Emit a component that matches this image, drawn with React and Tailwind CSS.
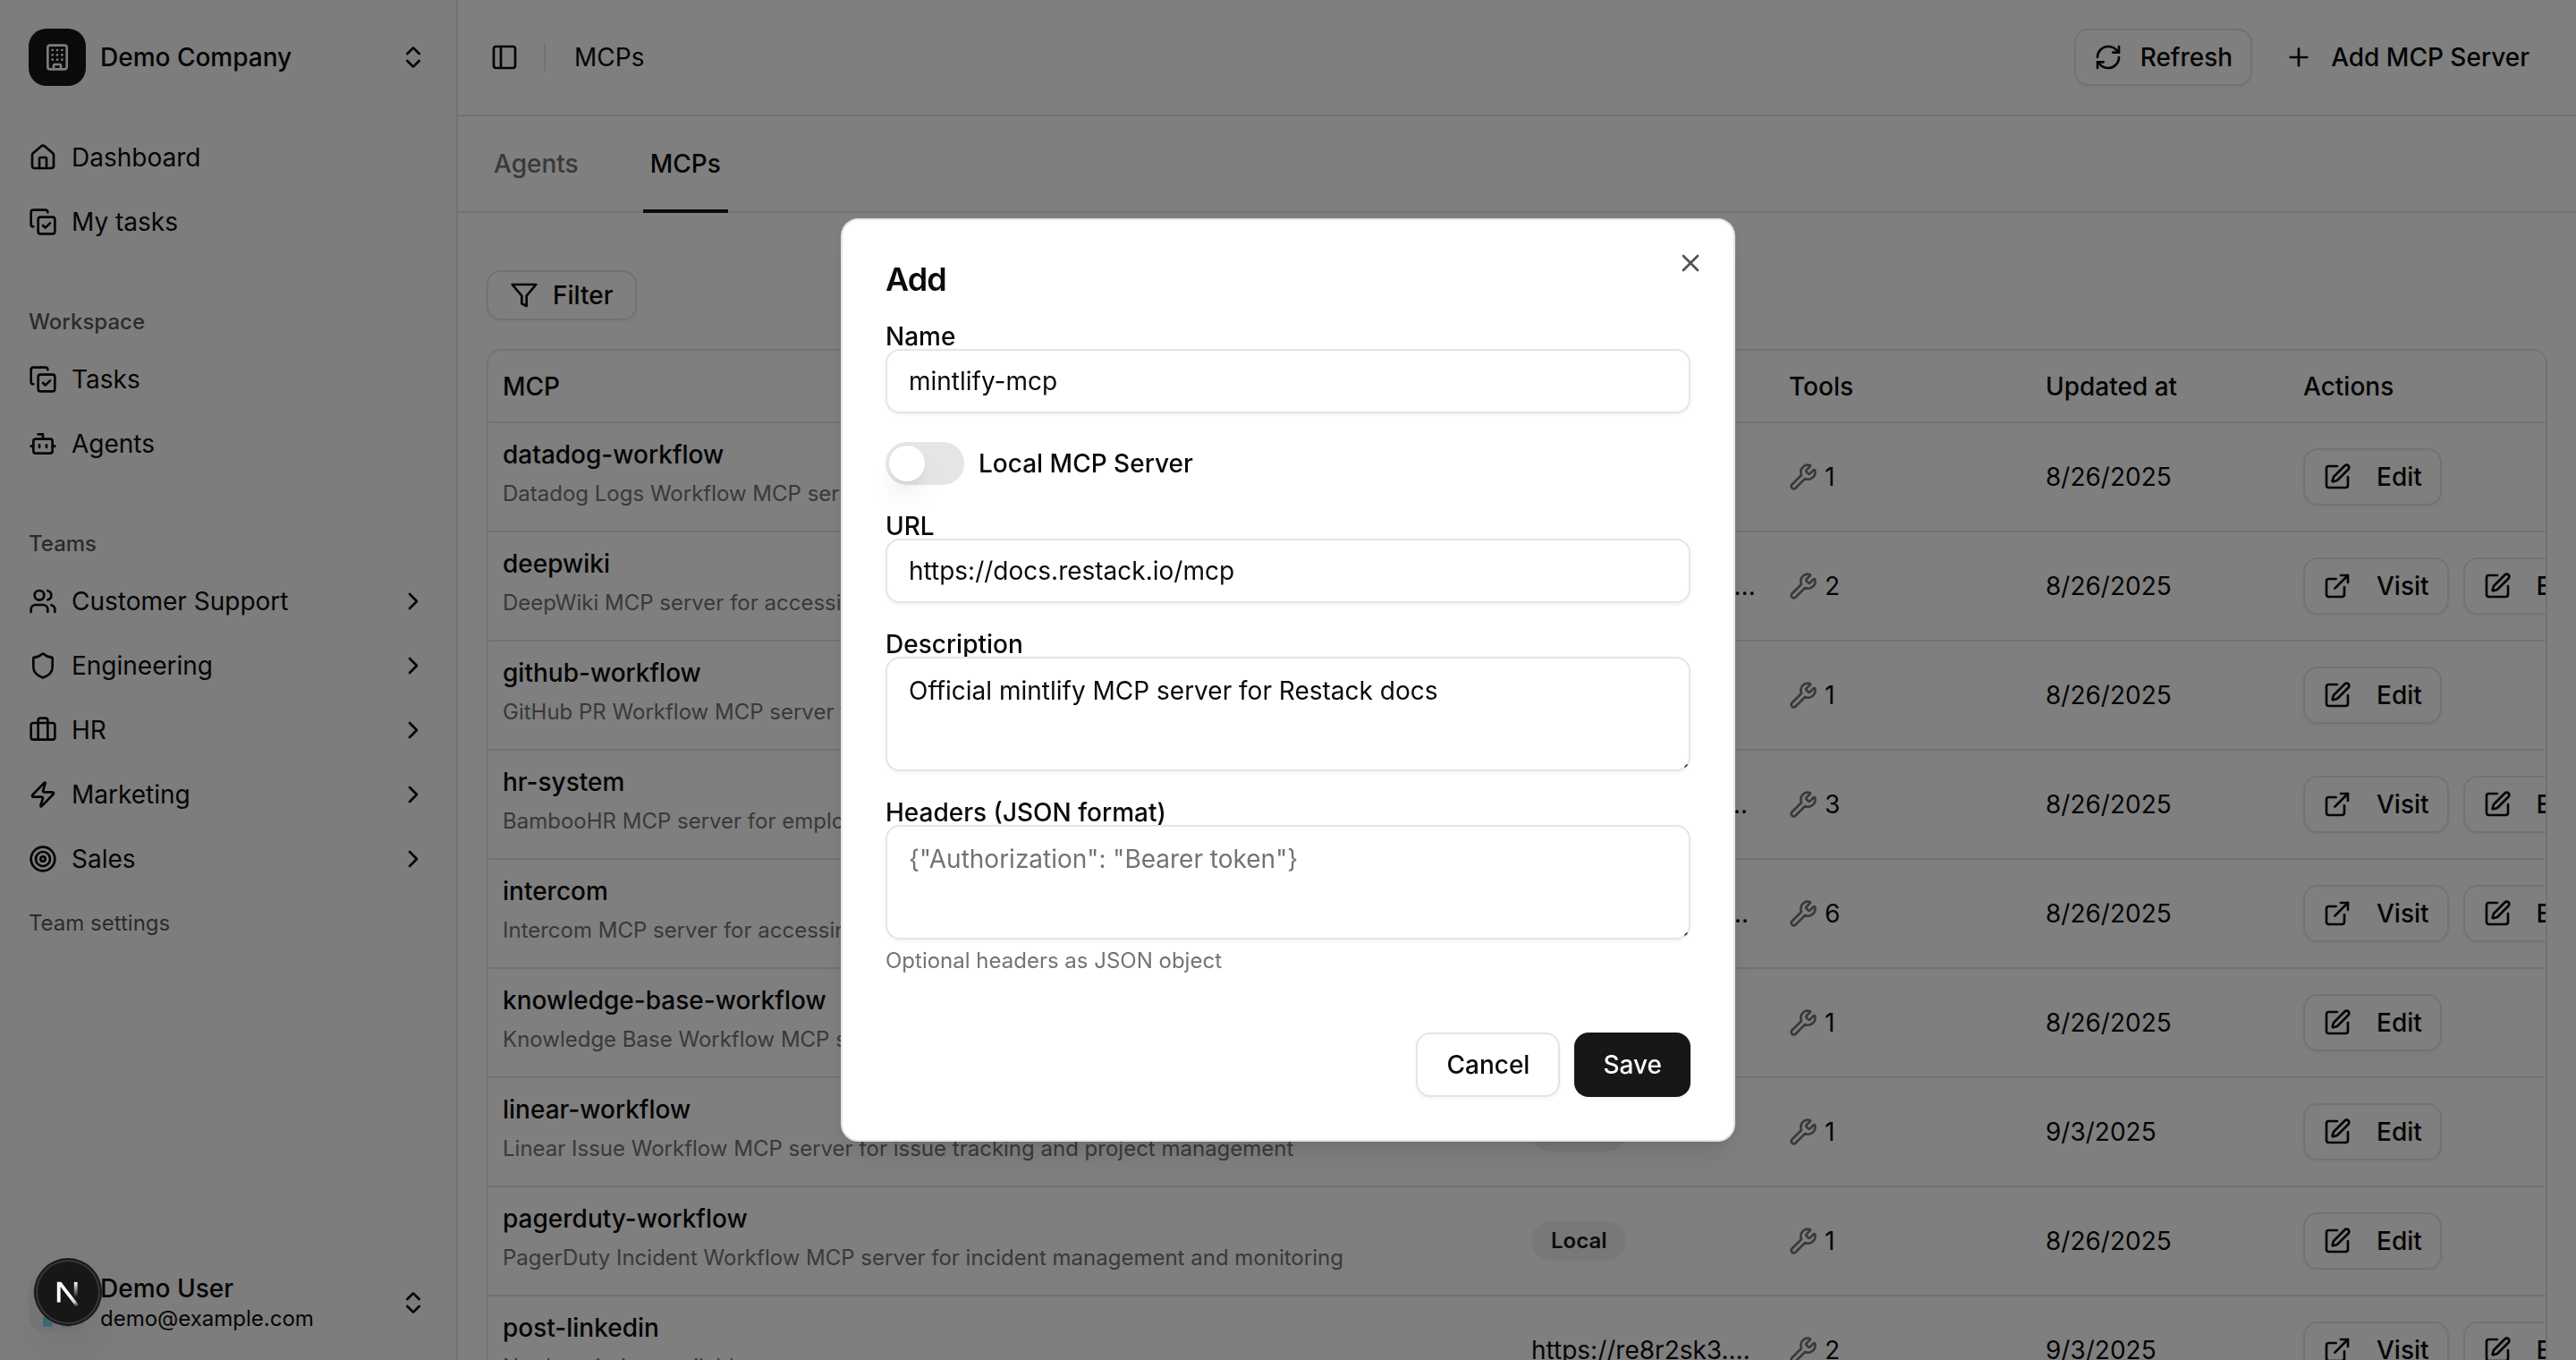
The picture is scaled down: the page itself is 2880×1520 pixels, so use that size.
import React, { useState } from "react";
import {
  Bot,
  Briefcase,
  Building,
  ChevronRight,
  ChevronsUpDown,
  CopyCheck,
  ExternalLink,
  House,
  PanelLeft,
  Plus,
  RefreshCw,
  Shield,
  SquarePen,
  Target,
  Users,
  Wrench,
  X,
  Zap,
} from "lucide-react";

const teams = [
  { name: "Customer Support", icon: Users },
  { name: "Engineering", icon: Shield },
  { name: "HR", icon: Briefcase },
  { name: "Marketing", icon: Zap },
  { name: "Sales", icon: Target },
];

const servers = [
  { name: "datadog-workflow", description: "Datadog Logs Workflow MCP server for log analysis and monitoring", tools: 1, updatedAt: "8/26/2025" },
  { name: "deepwiki", description: "DeepWiki MCP server for accessing repository documentation", url: "https://mcp.deepwiki.com/mcp", tools: 2, updatedAt: "8/26/2025" },
  { name: "github-workflow", description: "GitHub PR Workflow MCP server for pull requests", tools: 1, updatedAt: "8/26/2025" },
  { name: "hr-system", description: "BambooHR MCP server for employee data and time off", url: "https://mcp.bamboohr.com/mcp", tools: 3, updatedAt: "8/26/2025" },
  { name: "intercom", description: "Intercom MCP server for accessing conversations", url: "https://mcp.intercom.com/mcp", tools: 6, updatedAt: "8/26/2025" },
  { name: "knowledge-base-workflow", description: "Knowledge Base Workflow MCP server for search", tools: 1, updatedAt: "8/26/2025" },
  { name: "linear-workflow", description: "Linear Issue Workflow MCP server for issue tracking and project management", tools: 1, updatedAt: "9/3/2025" },
  { name: "pagerduty-workflow", description: "PagerDuty Incident Workflow MCP server for incident management and monitoring", tools: 1, updatedAt: "8/26/2025" },
  { name: "post-linkedin", description: "No description available", url: "https://re8r2sk3.mcp.restack.it", tools: 2, updatedAt: "9/3/2025" },
];

const FilterIcon = () => (
  <svg
    className="size-8 shrink-0"
    viewBox="0 0 24 24"
    fill="none"
    stroke="currentColor"
    strokeWidth="2"
    strokeLinecap="round"
    strokeLinejoin="round"
  >
    <polygon points="22 3 2 3 10 12.46 10 19 14 21 14 12.46 22 3" />
  </svg>
);

const NavItem = ({ icon: Icon, label, expandable }) => (
  <button className="flex h-16 w-full items-center gap-4 rounded-2xl px-4 text-left">
    <Icon className="size-8 shrink-0" />
    <span className="flex-1">{label}</span>
    {expandable && <ChevronRight className="size-8 shrink-0" />}
  </button>
);

const GroupLabel = ({ children }) => (
  <div className="flex h-16 items-center px-4 text-2xl font-medium text-[#0a0a0a]/70">
    {children}
  </div>
);

const Avatar = () => (
  <svg className="size-16 shrink-0 rounded-2xl bg-[#f0f0f0]" viewBox="0 0 12 12">
    <g fill="#84d2ee">
      <rect x="1" y="3" width="2" height="2" />
      <rect x="9" y="3" width="2" height="2" />
      <rect x="3" y="9" width="2" height="2" />
      <rect x="7" y="9" width="2" height="2" />
      <rect x="5" y="5" width="2" height="4" />
    </g>
  </svg>
);

const Sidebar = () => (
  <aside className="flex w-[512px] shrink-0 flex-col border-r-2 border-[#e5e5e5] bg-[#fafafa]">
    <div className="p-4">
      <button className="flex h-24 w-full items-center gap-4 px-4 text-left">
        <span className="flex size-16 items-center justify-center rounded-[20px] bg-[#171717] text-[#fafafa]">
          <Building className="size-8" />
        </span>
        <span className="flex-1 font-medium">Demo Company</span>
        <ChevronsUpDown className="size-8" />
      </button>
    </div>

    <nav className="flex flex-1 flex-col gap-4">
      <div className="flex flex-col gap-2 p-4">
        <NavItem icon={House} label="Dashboard" />
        <NavItem icon={CopyCheck} label="My tasks" />
      </div>

      <div className="p-4">
        <GroupLabel>Workspace</GroupLabel>
        <div className="flex flex-col gap-2">
          <NavItem icon={CopyCheck} label="Tasks" />
          <NavItem icon={Bot} label="Agents" />
        </div>
      </div>

      <div className="p-4">
        <GroupLabel>Teams</GroupLabel>
        <div className="flex flex-col gap-2">
          {teams.map((team) => (
            <NavItem key={team.name} icon={team.icon} label={team.name} expandable />
          ))}
          <div className="flex h-16 items-center px-4 text-2xl text-[#0a0a0a]/70">
            Team settings
          </div>
        </div>
      </div>
    </nav>

    <div className="p-4">
      <button className="flex h-24 w-full items-center gap-4 px-4 text-left">
        <Avatar />
        <span className="flex flex-1 flex-col">
          <span className="leading-[35px] font-medium">Demo User</span>
          <span className="text-2xl leading-8">demo@example.com</span>
        </span>
        <ChevronsUpDown className="size-8" />
      </button>
    </div>
  </aside>
);

const RowButton = ({ icon: Icon, children }) => (
  <button className="flex h-16 shrink-0 items-center gap-7 rounded-2xl border-2 border-[#e5e5e5] bg-white px-5 font-medium shadow-[0_2px_4px_rgba(0,0,0,0.05)]">
    <Icon className="size-8" />
    {children}
  </button>
);

const ServerTable = () => (
  <div className="overflow-hidden rounded-2xl border-2 border-[#e5e5e5]">
    <div className="grid h-[81px] grid-cols-[1150px_288px_287px_288px_1fr] items-center border-b-2 border-[#e5e5e5] font-medium">
      <div className="px-4">MCP</div>
      <div className="px-4">URL</div>
      <div className="px-4">Tools</div>
      <div className="px-4">Updated at</div>
      <div className="px-4">Actions</div>
    </div>
    {servers.map((server) => (
      <div
        key={server.name}
        className="grid h-[122px] grid-cols-[1150px_288px_287px_288px_1fr] items-center border-b-2 border-[#e5e5e5]"
      >
        <div className="flex flex-col gap-2 self-start px-4 pt-[15px]">
          <div className="leading-10 font-medium">{server.name}</div>
          <div className="text-2xl leading-8 text-[#737373]">{server.description}</div>
        </div>
        <div className="min-w-0 px-4">
          {server.url ? (
            <div className="truncate">{server.url}</div>
          ) : (
            <span className="inline-flex h-11 items-center rounded-full bg-[#f0f0f0] px-[22px] text-2xl font-semibold text-[#171717]">
              Local
            </span>
          )}
        </div>
        <div className="flex items-center gap-2 px-4">
          <Wrench className="size-8 text-[#737373]" />
          {server.tools}
        </div>
        <div className="px-4">{server.updatedAt}</div>
        <div className="flex min-w-0 gap-4 overflow-hidden py-2 pl-4">
          {server.url && <RowButton icon={ExternalLink}>Visit</RowButton>}
          <RowButton icon={SquarePen}>Edit</RowButton>
        </div>
      </div>
    ))}
  </div>
);

// Small grip in the bottom right corner of a textarea
const Grip = () => (
  <svg className="absolute right-[3px] bottom-1 size-1" viewBox="0 0 4 4">
    <path d="M0.5 3.5L3.5 0.5" stroke="#404040" strokeWidth="1.6" />
  </svg>
);

const inputStyle =
  "block w-full rounded-2xl border-2 border-[#e5e5e5] bg-white px-6 shadow-[0_2px_4px_rgba(0,0,0,0.05)] outline-none placeholder:text-[#737373]";

const AddDialog = () => {
  const [name, setName] = useState("mintlify-mcp");
  const [url, setUrl] = useState("https://docs.restack.io/mcp");
  const [description, setDescription] = useState("Official mintlify MCP server for Restack docs");
  const [headers, setHeaders] = useState("");
  const [isLocal, setIsLocal] = useState(false);

  return (
    <div className="fixed inset-0 flex items-center justify-center bg-black/50">
      <div className="relative flex w-[1000px] flex-col gap-8 rounded-[20px] border-2 border-[#e5e5e5] bg-white p-12 shadow-[0_20px_30px_-6px_rgba(0,0,0,0.1),0_8px_12px_-8px_rgba(0,0,0,0.1)]">
        <button className="absolute top-8 right-8 opacity-70">
          <X className="size-8" />
        </button>

        <h2 className="text-4xl leading-none font-semibold tracking-tight">Add</h2>

        <div>
          <label className="block leading-none font-medium">Name</label>
          <input
            className={`${inputStyle} h-[72px]`}
            value={name}
            onChange={(e) => setName(e.target.value)}
          />
        </div>

        <div className="flex items-center gap-4">
          <button
            role="switch"
            aria-checked={isLocal}
            onClick={() => setIsLocal(!isLocal)}
            className="flex h-12 w-[88px] items-center rounded-full bg-[#e5e5e5] px-1"
          >
            <span className="size-10 rounded-full bg-white shadow-[0_20px_30px_-6px_rgba(0,0,0,0.1),0_8px_12px_-8px_rgba(0,0,0,0.1)]" />
          </button>
          <label className="leading-none font-medium">Local MCP Server</label>
        </div>

        <div>
          <label className="block leading-none font-medium">URL</label>
          <input
            className={`${inputStyle} h-[72px]`}
            value={url}
            onChange={(e) => setUrl(e.target.value)}
          />
        </div>

        <div>
          <label className="block leading-none font-medium">Description</label>
          <div className="relative">
            <textarea
              className={`${inputStyle} h-32 resize-none py-4`}
              value={description}
              onChange={(e) => setDescription(e.target.value)}
            />
            <Grip />
          </div>
        </div>

        <div>
          <label className="block leading-none font-medium">Headers (JSON format)</label>
          <div className="relative">
            <textarea
              className={`${inputStyle} h-32 resize-none py-4`}
              placeholder={'{"Authorization": "Bearer token"}'}
              value={headers}
              onChange={(e) => setHeaders(e.target.value)}
            />
            <Grip />
          </div>
          <p className="mt-2 text-2xl leading-8 text-[#737373]">Optional headers as JSON object</p>
        </div>

        <div className="mt-8 flex justify-end gap-4">
          <button className="h-[72px] rounded-2xl border-2 border-[#e5e5e5] bg-white px-8 font-medium shadow-[0_2px_4px_rgba(0,0,0,0.05)]">
            Cancel
          </button>
          <button className="h-[72px] rounded-2xl bg-[#171717] px-8 font-medium text-[#fafafa] shadow-[0_2px_4px_rgba(0,0,0,0.05)]">
            Save
          </button>
        </div>
      </div>
    </div>
  );
};

const DevBadge = () => (
  <div className="fixed bottom-10 left-10 size-[72px] rounded-full bg-[#171717] shadow-[0_0_0_2px_#171717,inset_0_0_0_2px_rgba(255,255,255,0.14),0_32px_64px_-16px_rgba(0,0,0,0.24)]">
    <svg className="size-full" viewBox="0 0 72 72" fill="none" strokeWidth="3.8">
      <defs>
        <linearGradient id="diagonal" gradientUnits="userSpaceOnUse" x1="38" y1="40" x2="47" y2="52">
          <stop stopColor="white" />
          <stop offset="0.6" stopColor="white" stopOpacity="0.8" />
          <stop offset="1" stopColor="white" stopOpacity="0" />
        </linearGradient>
        <linearGradient id="stem" gradientUnits="userSpaceOnUse" x1="45" y1="25" x2="45" y2="42">
          <stop stopColor="white" />
          <stop offset="1" stopColor="white" stopOpacity="0" />
        </linearGradient>
        <clipPath id="mark">
          <rect x="20" y="24.7" width="32" height="30" />
        </clipPath>
      </defs>
      <g clipPath="url(#mark)">
        <path d="M47.6 52.9L25.7 24.5V47.6" stroke="url(#diagonal)" />
        <path d="M44.7 24.7V48" stroke="url(#stem)" />
      </g>
    </svg>
  </div>
);

const App = () => {
  return (
    <div className="flex h-[1520px] w-[2880px] overflow-hidden bg-white font-[Inter,sans-serif] text-[28px] leading-10 text-[#0a0a0a]">
      <Sidebar />

      <main className="flex min-w-0 flex-1 flex-col">
        <header className="flex h-[130px] shrink-0 items-center border-b-2 border-[#e5e5e5] px-8">
          <PanelLeft className="ml-1 size-8" />
          <div className="ml-7 h-8 w-0.5 bg-[#e5e5e5]" />
          <span className="ml-8 flex-1">MCPs</span>
          <div className="flex gap-4">
            <button className="flex h-16 items-center gap-5 rounded-2xl border-2 border-[#e5e5e5] bg-white px-5 font-medium shadow-[0_2px_4px_rgba(0,0,0,0.05)]">
              <RefreshCw className="size-8" />
              Refresh
            </button>
            <button className="flex h-16 items-center gap-5 px-5 font-medium">
              <Plus className="size-8" />
              Add MCP Server
            </button>
          </div>
        </header>

        <div className="flex h-[108px] shrink-0 gap-16 border-b-2 border-[#e5e5e5] px-8 font-medium">
          <button className="px-2 text-[#737373]">Agents</button>
          <button className="relative px-2">
            MCPs
            <span className="absolute inset-x-0 -bottom-0.5 h-1 bg-[#171717]" />
          </button>
        </div>

        <div className="flex flex-col items-start gap-8 px-8 pt-16">
          <button className="flex h-14 items-center gap-4 rounded-2xl border-2 border-[#e5e5e5] bg-white px-6 font-medium shadow-[0_2px_4px_rgba(0,0,0,0.05)]">
            <FilterIcon />
            Filter
          </button>
          <div className="w-full">
            <ServerTable />
          </div>
        </div>
      </main>

      <AddDialog />
      <DevBadge />
    </div>
  );
};

export default App;
